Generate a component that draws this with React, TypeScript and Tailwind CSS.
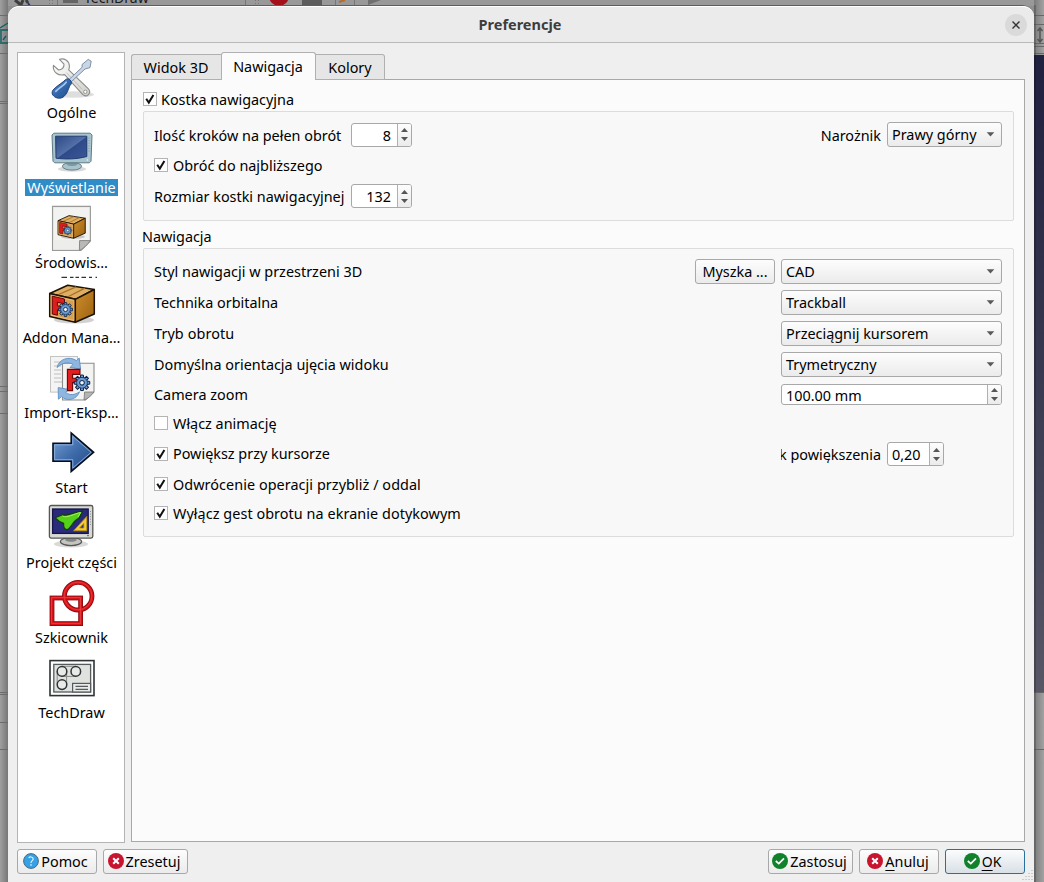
import React from "react";

const F = "font-['Noto_Sans',sans-serif]";

function Gear({ x, y, r }: { x: number; y: number; r: number }) {
  const teeth = [0, 45, 90, 135, 180, 225, 270, 315];
  return (
    <g transform={`translate(${x} ${y}) scale(${r / 8})`}>
      {teeth.map((a) => (
        <path key={a} d="M-1.9 -5 L-1.5 -8.6 H1.5 L1.9 -5 Z" transform={`rotate(${a})`} fill="#729fcf" stroke="#0b1f42" strokeWidth="1.1" />
      ))}
      <circle r="6" fill="#5b8bc4" stroke="#17335f" strokeWidth="0.9" />
      <circle r="5.2" fill="#6d9dd3" />
      <circle r="2.6" fill="#f2f2ee" stroke="#17335f" strokeWidth="1.2" />
    </g>
  );
}

function Crate() {
  return (
    <g strokeLinejoin="round">
      <ellipse cx="26" cy="41" rx="20" ry="3.5" fill="#000" opacity="0.18" />
      <path d="M1.7 14.5 L19.7 6.3 L46.3 10.5 L27.3 20.3 Z" fill="#e0ae62" stroke="#1d1204" strokeWidth="1.5" />
      <path d="M9.5 16 L28 7.8 M19.5 18 L37 9.2" stroke="#a3702a" strokeWidth="1.3" />
      <path d="M1.7 14.5 L27.3 20.3 V43.3 L1.7 37.5 Z" fill="#d9a050" stroke="#1d1204" strokeWidth="1.5" />
      <path d="M27.3 20.3 L46.3 10.5 V35 L27.3 43.3 Z" fill="url(#side)" stroke="#1d1204" strokeWidth="1.5" />
      <path d="M3.2 16.4 L25.9 21.5 V41.5 L3.2 36.2 Z" fill="none" stroke="#efc98a" strokeWidth="0.7" />
      <path d="M4.3 17.2 L16.5 20 V24.8 L9.4 23.2 V26.8 L14.5 28 V32 L9.4 30.8 V36.2 L4.3 35 Z" fill="#dd1d1d" stroke="#6a0606" strokeWidth="1" />
      <Gear x={17.5} y={30.5} r={6.4} />
    </g>
  );
}

function Defs() {
  return (
    <svg width="0" height="0" className="absolute">
      <defs>
        <linearGradient id="side" x1="0" y1="0" x2="1" y2="1">
          <stop offset="0" stopColor="#d08f2e" />
          <stop offset="1" stopColor="#9a610f" />
        </linearGradient>
        <linearGradient id="screen" x1="0" y1="0" x2="1" y2="1">
          <stop offset="0" stopColor="#2b4a86" />
          <stop offset="0.5" stopColor="#5570a8" />
          <stop offset="0.52" stopColor="#2e4a88" />
          <stop offset="1" stopColor="#3c589a" />
        </linearGradient>
        <linearGradient id="arrow" x1="0" y1="0" x2="1" y2="1">
          <stop offset="0" stopColor="#7ba3d4" />
          <stop offset="0.5" stopColor="#3f6cab" />
          <stop offset="1" stopColor="#23457f" />
        </linearGradient>
        <linearGradient id="metal" x1="0" y1="0" x2="1" y2="1">
          <stop offset="0" stopColor="#ffffff" />
          <stop offset="1" stopColor="#cfcfcb" />
        </linearGradient>
        <linearGradient id="grip" x1="0" y1="0" x2="1" y2="1">
          <stop offset="0" stopColor="#6c9ddb" />
          <stop offset="0.5" stopColor="#3468ae" />
          <stop offset="1" stopColor="#1f4887" />
        </linearGradient>
      </defs>
    </svg>
  );
}

const icons: Record<string, React.ReactNode> = {
  tools: (
    <>
      <ellipse cx="25" cy="40.5" rx="21" ry="3.2" fill="#000" opacity="0.13" />
      <path
        d="M11.5 5.3 C16 3.8 21.2 6.5 21.4 12 C21.5 13.4 21.2 14.6 20.7 15.8 L40.2 34.6 C44.2 38.8 38.8 44.4 34.6 40.4 L16.6 20.6 C10.5 22.4 4.6 18.2 5.4 11.4 L10.6 16 C13.8 16 16.2 13.8 16 10.2 Z"
        fill="url(#metal)" stroke="#8b8d88" strokeWidth="1.1" strokeLinejoin="round"
      />
      <circle cx="37.3" cy="37.8" r="1.7" fill="#fff" stroke="#8b8d88" strokeWidth="0.9" />
      <path d="M18.5 18.7 L34 35.2" stroke="#b9bbb6" strokeWidth="0.9" />
      <path d="M20.5 26 L34.2 13.2 L34 10.6 L40.2 5.4 L43.2 7.2 L42 13.6 L37 15 L22.6 28.4 Z" fill="#c9d6e6" stroke="#7e90a8" strokeWidth="1" strokeLinejoin="round" />
      <path d="M17.6 25.6 C19 24.4 21 24.8 22.2 26 C23.6 27.4 24 29.6 22.6 30.8 C20.6 32.4 20.6 38.2 16 42.4 C13.6 44.6 9.6 44.9 6.6 42.8 C3.4 40.4 3.4 37.4 6 35 C9.6 31.4 14.8 28.6 17.6 25.6 Z" fill="url(#grip)" stroke="#1e437e" strokeWidth="1" />
      <path d="M18.2 28.2 C15.8 31.8 10.6 34.2 7.8 37.4" fill="none" stroke="#a9c8ee" strokeWidth="1.6" strokeLinecap="round" />
    </>
  ),
  display: (
    <>
      <ellipse cx="24" cy="40" rx="14" ry="2.8" fill="#000" opacity="0.15" />
      <path d="M19 33 h10 l1 5 h-12 z" fill="#8fabb5" />
      <ellipse cx="24" cy="37.3" rx="9.6" ry="3.8" fill="#a9c2cb" stroke="#5a7680" strokeWidth="0.9" />
      <path d="M18.6 33.4 h10.8 v2.2 c-3 2 -7.8 2 -10.8 0 z" fill="#7b98a2" />
      <path d="M5.8 4.2 H42.2 L44 6 L43 32.2 L41.4 33.8 H6.6 L5 32.2 L4 6 Z" fill="#a8c4cf" stroke="#5c7984" strokeWidth="1" />
      <path d="M7.6 7.2 H38.8 V27.5 C28 30.4 18 30.4 8 29.2 Z" fill="url(#screen)" stroke="#1c3468" strokeWidth="0.9" />
      <path d="M41 8.5 v14" stroke="#6e8d98" strokeWidth="0.9" strokeDasharray="1 1.6" />
      <circle cx="39.4" cy="31" r="0.8" fill="#e8f4f8" />
    </>
  ),
  workbench: (
    <>
      <path d="M4.5 2.4 H42.4 V37 L33 46.4 H4.5 Z" fill="#ebebea" stroke="#9a9b98" strokeWidth="1.1" />
      <path d="M6 4 H41 V36.6 H6 Z" fill="#f2f2f1" />
      <path d="M5.5 36 H34 V45.6 H5.5Z" fill="#ededec" />
      <path d="M31.4 46.4 L31.6 36.6 H42.4 C39 41 36 44.5 31.4 46.4 Z" fill="#b9bab7" stroke="#7f807d" strokeWidth="0.9" />
      <g transform="translate(9 7.8) scale(0.61)">
        <Crate />
      </g>
    </>
  ),
  crate: <Crate />,
  io: (
    <>
      <rect x="2.5" y="2.5" width="27" height="35.6" fill="#f4f4f4" stroke="#c3c4c2" />
      <path d="M6 8h9M6 12h7M6 16h7M6 20h7M6 24h7M6 28h8" stroke="#d0d0d0" strokeWidth="1.3" />
      <path d="M14.5 9.3 H46 V37.8 L37.5 46 H14.5 Z" fill="#f3f3f2" stroke="#8c8d8a" strokeWidth="1.1" />
      <path d="M36 46 L36.6 38 H46 C43.4 41.4 40 44.8 36 46 Z" fill="#b4b5b2" stroke="#777875" strokeWidth="0.8" />
      <path d="M9 13.5 C11 5.2 21 1.6 28.4 6.6 L31.2 4 L32.6 15 L22 13.4 L25 10.4 C20 7.2 14.2 9 9 13.5 Z" fill="#8fb6df" stroke="#5f8fc5" strokeWidth="0.9" />
      <path d="M31.5 37.8 C28.5 46.4 18.4 47.4 13.6 42.6 L10.4 45.2 L10.2 33.6 L20.8 35.4 L17.6 38.4 C22 41.8 27 41 31.5 37.8 Z" fill="#8fb6df" stroke="#5f8fc5" strokeWidth="0.9" />
      <path d="M19.4 15.4 H32 V20.4 H24.6 V24.2 H29.6 V28.6 H24.6 V36.6 H19.4 Z" fill="#e02020" stroke="#6a0606" strokeWidth="1.1" />
      <Gear x={34} y={28.8} r={7.2} />
    </>
  ),
  start: (
    <>
      <path d="M5 14.3 H23.2 V4 L45.6 23.3 L23.2 42.6 V32.3 H5 Z" fill="url(#arrow)" stroke="#060d1b" strokeWidth="1.6" strokeLinejoin="miter" />
      <path d="M6.6 15.9 H24.8 V7.5 L43.2 23.3 L24.8 39.1 V30.7 H6.6 Z" fill="none" stroke="#8cb1df" strokeWidth="0.9" />
    </>
  ),
  part: (
    <>
      <ellipse cx="23" cy="40" rx="17" ry="3.6" fill="#000" opacity="0.15" />
      <path d="M17 33 h12 l1 5 h-14 z" fill="#a9a9a6" />
      <ellipse cx="23" cy="37.6" rx="10.6" ry="4" fill="#c4c5c1" stroke="#555753" strokeWidth="1.2" />
      <path d="M17.4 34 h11.2 v2.4 c-3 1.8 -8 1.8 -11.2 0 z" fill="#858682" />
      <rect x="1.4" y="1.5" width="43.4" height="32.6" rx="1.8" fill="#d9dad6" stroke="#555753" strokeWidth="1.3" />
      <rect x="4.6" y="5" width="35.6" height="24.4" fill="#2a2a7c" stroke="#15154a" strokeWidth="1.3" />
      <path d="M7.2 13.8 L14.5 10.6 C19 13 25 8 34.6 7.2 L30.8 14.4 C26 15.5 23.4 23.4 19.6 25.4 C16.4 26 15.4 23.4 15.6 19.4 C13 18.6 10 16.6 7.2 13.8 Z" fill="#55cf18" stroke="#103d05" strokeWidth="1.2" />
      <path d="M14.5 12 C19 14.6 26 9.6 32.6 8.6 L30 13" fill="none" stroke="#a5ee6a" strokeWidth="1" />
      <path d="M38.8 12.4 V26.8 H25.6 Z M35.8 19.5 L31.6 24 H35.8 Z" fill="#f2cc38" stroke="#b78c0a" strokeWidth="0.8" fillRule="evenodd" />
      <path d="M42.5 7 v14" stroke="#8b8c88" strokeWidth="0.9" strokeDasharray="1 1.6" />
      <circle cx="40" cy="31.6" r="0.8" fill="#555753" />
    </>
  ),
  sketch: (
    <g fill="none">
      <rect x="4" y="19" width="28.6" height="25.6" stroke="#8e0b10" strokeWidth="4.8" />
      <circle cx="30.2" cy="17.2" r="13.8" stroke="#8e0b10" strokeWidth="4.8" />
      <rect x="4" y="19" width="28.6" height="25.6" stroke="#d8141b" strokeWidth="3" />
      <circle cx="30.2" cy="17.2" r="13.8" stroke="#d8141b" strokeWidth="3" />
      <rect x="3.6" y="18.6" width="28.8" height="25.8" stroke="#ef3a3a" strokeWidth="0.9" />
      <circle cx="30" cy="17" r="13.9" stroke="#ef3a3a" strokeWidth="0.9" />
    </g>
  ),
  techdraw: (
    <g fill="none">
      <rect x="2" y="6.6" width="44" height="35" fill="#fff" stroke="#2e3436" strokeWidth="1.6" />
      <rect x="5.8" y="10.4" width="36.8" height="27.6" fill="#dfe2de" stroke="#555a5c" strokeWidth="1.3" />
      <path d="M14 12.3 H28 M14 22.4 H28 M9.2 17 V30 M18.6 17 V30" stroke="#888a85" strokeWidth="1" />
      <circle cx="14" cy="17.4" r="4.8" fill="#e8eae7" stroke="#2e3436" strokeWidth="1.5" />
      <circle cx="27.8" cy="17.4" r="4.8" fill="#e8eae7" stroke="#2e3436" strokeWidth="1.5" />
      <circle cx="14" cy="30.6" r="4.8" fill="#e8eae7" stroke="#2e3436" strokeWidth="1.5" />
      <rect x="24.6" y="29.4" width="18" height="8.6" fill="#e8eae7" stroke="#555a5c" strokeWidth="1.2" />
      <path d="M27.5 32.3 H40 M27.5 35.4 H40" stroke="#555a5c" strokeWidth="1.2" />
    </g>
  ),
};

type Item = { icon: string; label: string; selected?: boolean };
const items: Item[] = [
  { icon: "tools", label: "Ogólne" },
  { icon: "display", label: "Wyświetlanie", selected: true },
  { icon: "workbench", label: "Środowis…" },
  { icon: "crate", label: "Addon Mana…" },
  { icon: "io", label: "Import-Eksp…" },
  { icon: "start", label: "Start" },
  { icon: "part", label: "Projekt części" },
  { icon: "sketch", label: "Szkicownik" },
  { icon: "techdraw", label: "TechDraw" },
];

function Check({ on, children, className = "" }: { on?: boolean; children: React.ReactNode; className?: string }) {
  return (
    <label className={`flex items-center ${className}`}>
      <span className="flex size-[14px] items-center justify-center border border-[#b4b4b4] bg-white">
        {on && (
          <svg width="12" height="12" viewBox="0 0 12 12">
            <path d="M2.2 5.8 L4.8 9.6 L9.4 2" fill="none" stroke="#111" strokeWidth="2" />
          </svg>
        )}
      </span>
      {children}
    </label>
  );
}

function Combo({ text, className }: { text: string; className: string }) {
  return (
    <div className={`flex h-[25px] items-center justify-between rounded-[3px] border border-[#a8a8a8] bg-linear-to-b from-[#fdfdfd] to-[#ebebeb] pl-1 pr-[6px] ${className}`}>
      <span>{text}</span>
      <svg width="9" height="5" viewBox="0 0 9 5">
        <path d="M0.7 0.3 H8.3 L4.5 4.4 Z" fill="#5a5a5a" />
      </svg>
    </div>
  );
}

function Spin({ text, className, right }: { text: string; className: string; right?: boolean }) {
  return (
    <div className={`flex overflow-hidden rounded-[3px] border border-[#a8a8a8] bg-white ${className}`}>
      <span className={`flex flex-1 items-center pt-px ${right ? "justify-end pr-[6px]" : "pl-1"}`}>{text}</span>
      <span className="flex w-[14px] flex-col items-center justify-center gap-[5px] border-l border-[#b0b0b0] bg-linear-to-b from-[#fdfdfd] to-[#ebebeb] pr-px">
        <svg width="7" height="4" viewBox="0 0 7 4"><path d="M0 4 L3.5 0 L7 4 Z" fill="#555" /></svg>
        <svg width="7" height="4" viewBox="0 0 7 4"><path d="M0 0 H7 L3.5 4 Z" fill="#555" /></svg>
      </span>
    </div>
  );
}

function Badge({ kind }: { kind: "help" | "cancel" | "ok" }) {
  return (
    <svg width="16" height="16" viewBox="0 0 16 16" className="mb-[2px] shrink-0">
      <circle cx="8" cy="8" r={kind === "help" ? 7.4 : 8} fill={kind === "help" ? "#36a1e3" : kind === "ok" ? "#12812b" : "#c8142f"} stroke={kind === "help" ? "#4c6b82" : "none"} strokeWidth="1" />
      {kind === "ok" && <path d="M3.8 8 L6.8 10.6 L12 5.4" fill="none" stroke="#fff" strokeWidth="1.7" />}
      {kind === "cancel" && <path d="M5.2 5.2 L10.8 10.8 M10.8 5.2 L5.2 10.8" stroke="#fff" strokeWidth="2" />}
      {kind === "help" && (
        <>
          <path d="M5.8 5 C6.4 3.6 10.2 3.4 10.2 6 C10.2 7.6 8 7.8 8 10" fill="none" stroke="#d8f0ff" strokeWidth="1.2" />
          <rect x="7.3" y="11.2" width="1.4" height="1.5" fill="#d8f0ff" />
        </>
      )}
    </svg>
  );
}

const btn = "flex h-[25px] items-center justify-center rounded-[3px] border border-[#a8a8a8] bg-linear-to-b from-[#fdfdfd] to-[#ebebeb]";

function Backdrop() {
  return (
    <div className="absolute inset-0 flex flex-col overflow-hidden bg-[#8f8f8f]">
      <svg width="1044" height="882" viewBox="0 0 1044 882">
        <defs>
          <linearGradient id="lft" x1="0" x2="1"><stop offset="0" stopColor="#a0a0a0" /><stop offset="1" stopColor="#777" /></linearGradient>
          <linearGradient id="rgt" x1="0" x2="1"><stop offset="0" stopColor="#7b7b7b" /><stop offset="1" stopColor="#a2a2a2" /></linearGradient>
          <linearGradient id="view" x1="0" y1="0" x2="0" y2="1"><stop offset="0" stopColor="#20203f" /><stop offset="0.55" stopColor="#3b3b52" /><stop offset="1" stopColor="#575766" /></linearGradient>
        </defs>
        <rect width="1044" height="6" fill="#999" />
        <rect y="0" width="8" height="882" fill="url(#lft)" />
        <rect x="1034" width="10" height="882" fill="url(#rgt)" />
        <path d="M0 15.5H12M0 53.5H8M0 101.5H8M0 103.5H8M0 386.5H8M0 391.5H8M0 413.5H8M0 692.5H8M0 694.5H8M0 722.5H8M0 749.5H8" stroke="#6c6c6c" />
        <path d="M0 28 L8 23 M0 30 H8 M1 31 V42 M0 43 H8 M3 40 L6 36" stroke="#0c5f5f" strokeWidth="1.4" fill="none" />
        <path d="M15 0 L21 5 M21 5 L23 0 M26 0 L28 3" stroke="#3f3f3f" strokeWidth="3" fill="none" />
        <path d="M28 3 L30 6" stroke="#26397a" strokeWidth="2" />
        <path d="M57.5 0V5M245.5 0V5" stroke="#777" />
        <rect x="63" width="15" height="3" fill="#666" />
        <text x="84" y="2.5" fontSize="14" fontFamily="Noto Sans" fill="#1a1a1a">TechDraw</text>
        <path d="M49.5 0V6M52.5 0V6M255.5 0V6M258.5 0V6" stroke="#777" strokeDasharray="1 2" />
        <circle cx="279" cy="-4" r="10" fill="#a3101c" />
        <rect x="302" width="20" height="5" fill="#5d5d5d" />
        <path d="M335.5 0V5M354.5 0V5" stroke="#777" />
        <path d="M339 2 L345 0" stroke="#b86a2a" strokeWidth="2" />
        <path d="M368 0 H381 L368 5 Z" fill="#6f6f6f" />
        <path d="M1034 15.5H1044M1034 24.5H1044M1034 43.5H1044M1034 46.5H1044M1034 53.5H1044" stroke="#666" />
        <path d="M1040 29 V41 M1037.5 31 L1040 28 L1042.5 31 M1037.5 39 L1040 42 L1042.5 39" stroke="#555" strokeWidth="1.5" fill="none" />
        <rect x="1034" y="55" width="10" height="637" fill="url(#view)" />
        <path d="M1034 692.5H1044M1034 749.5H1044" stroke="#666" />
        <rect x="1034" y="5" width="2" height="877" fill="#000" opacity="0.18" />
      </svg>
    </div>
  );
}

export default function App() {
  return (
    <div className={`relative h-[882px] w-[1044px] overflow-hidden pl-2 pt-[5px] text-[14.4px] leading-[17px] whitespace-nowrap text-black ${F}`}>
      <Backdrop />
      <Defs />
      <div className="relative flex h-[877px] w-[1026px] flex-col rounded-t-[12px] border-t border-[#5e5e5e] bg-[#efefef]">
        <header className="flex h-[37px] items-center rounded-t-[11px] border-t border-b border-t-white border-b-[#b9b9b9] bg-[#ebebeb]">
          <h1 className="flex-1 pl-[27px] text-center text-[14.5px] font-bold text-[#3d3d3d]">Preferencje</h1>
          <button className="mr-[7px] flex size-[22px] items-center justify-center rounded-full bg-[#dadada]">
            <svg width="8" height="8" viewBox="0 0 8 8"><path d="M0.5 0.5 L7.5 7.5 M7.5 0.5 L0.5 7.5" stroke="#333" strokeWidth="1.4" /></svg>
          </button>
        </header>

        <div className="flex gap-[6px] pl-[9px] pt-[9px]">
          <nav className="flex h-[791px] w-[108px] flex-col border border-[#b4b4b4] bg-white pt-px pl-px">
            {items.map((it) => (
              <div key={it.label} className="flex h-[75px] flex-col items-center">
                <svg width="48" height="48" viewBox="0 0 48 48" className="shrink-0">{icons[it.icon]}</svg>
                <span className={`mt-[2px] h-[17px] px-[2px] ${it.selected ? "bg-[#308cc6] text-white" : ""}`}>{it.label}</span>
                {it.icon === "workbench" && (
                  <svg width="38" height="2" viewBox="0 0 38 2" className="mt-[5px] ml-4">
                    <path d="M0.5 1.3 H6 M9 1.3 H12.5 M14.5 1.3 H18 M20.5 1.3 H25 M28 1.3 H31 M34.5 1.3 H36" stroke="#333" strokeWidth="1.2" />
                  </svg>
                )}
              </div>
            ))}
          </nav>

          <main className="flex h-[790px] w-[894px] flex-col">
            <div className="relative z-10 flex h-[28px] items-end">
              <div className="flex h-[26px] w-[90px] items-center justify-center rounded-tl-[3px] border border-r-0 border-[#b0b0b0] bg-[#e6e6e6] pr-px">Widok 3D</div>
              <div className="flex h-[28px] w-[95px] items-center justify-center rounded-t-[3px] border border-b-0 border-[#b0b0b0] bg-[#fbfbfb] pr-px">Nawigacja</div>
              <div className="flex h-[26px] w-[69px] items-center justify-center rounded-tr-[3px] border border-l-0 border-[#b0b0b0] bg-[#e6e6e6]">Kolory</div>
            </div>
            <div className="-mt-px flex flex-1 flex-col border border-[#a8a8a8] bg-[#fbfbfb] pl-[11px] pr-[10px] pt-[12px]">
              <Check on className="h-[14px] gap-1">Kostka nawigacyjna</Check>
              <section className="mt-[5px] flex h-[110px] w-[871px] flex-col rounded-[2px] border border-[#dcdcdc] bg-[#f8f8f8] pl-[10px] pr-[11px] pt-[10px]">
                <div className="flex h-[25px] items-center">
                  <span className="w-[197px] pt-px">Ilość kroków na pełen obrót</span>
                  <Spin right text="8" className="h-[24px] w-[61px]" />
                  <span className="ml-auto mr-[6px] pt-px">Narożnik</span>
                  <Combo text="Prawy górny" className="w-[115px]" />
                </div>
                <Check on className="mt-[11px] h-[14px] gap-[5px]">Obróć do najbliższego</Check>
                <div className="mt-[12px] flex h-[24px] items-center">
                  <span className="w-[197px]">Rozmiar kostki nawigacyjnej</span>
                  <Spin right text="132" className="h-[24px] w-[61px]" />
                </div>
              </section>
              <h2 className="-ml-px mt-[7px] h-[17px]">Nawigacja</h2>
              <section className="mt-[3px] flex h-[289px] w-[871px] flex-col rounded-[2px] border border-[#dcdcdc] bg-[#f8f8f8] pl-[10px] pr-[11px] pt-[10px]">
                <div className="flex h-[25px] items-center">
                  <span className="flex-1 tracking-[0.02px]">Styl nawigacji w przestrzeni 3D</span>
                  <button className={`${btn} mr-[6px] w-[80px]`}>Myszka ...</button>
                  <Combo text="CAD" className="w-[221px]" />
                </div>
                <div className="mt-[6px] flex h-[25px] items-center justify-between">
                  <span>Technika orbitalna</span>
                  <Combo text="Trackball" className="w-[221px]" />
                </div>
                <div className="mt-[6px] flex h-[25px] items-center justify-between">
                  <span className="tracking-[0.1px]">Tryb obrotu</span>
                  <Combo text="Przeciągnij kursorem" className="w-[221px]" />
                </div>
                <div className="mt-[6px] flex h-[25px] items-center justify-between">
                  <span>Domyślna orientacja ujęcia widoku</span>
                  <Combo text="Trymetryczny" className="w-[221px]" />
                </div>
                <div className="mt-[7px] flex h-[21px] items-center justify-between">
                  <span>Camera zoom</span>
                  <Spin text="100.00 mm" className="h-[21px] w-[221px]" />
                </div>
                <Check className="mt-[11px] h-[14px] gap-[5px]">Włącz animację</Check>
                <div className="mt-[12px] flex h-[24px] items-center">
                  <Check on className="mb-px h-[14px] gap-[5px]">Powiększ przy kursorze</Check>
                  <span className="ml-auto mr-[6px] flex w-[100px] justify-end overflow-hidden">Krok powiększenia</span>
                  <Spin text="0,20" className="mr-[58px] h-[24px] w-[57px]" />
                </div>
                <Check on className="mt-[11px] h-[14px] gap-[5px] tracking-[0.06px]">Odwrócenie operacji przybliż / oddal</Check>
                <Check on className="mt-[15px] h-[14px] gap-[5px] tracking-[0.06px]">Wyłącz gest obrotu na ekranie dotykowym</Check>
              </section>
            </div>
          </main>
        </div>

        <footer className="mt-[6px] flex h-[25px] gap-[6px] pl-[9px] pr-[9px]">
          <button className={`${btn} w-[80px] gap-[2px] pr-[3px]`}><Badge kind="help" />Pomoc</button>
          <button className={`${btn} w-[85px] gap-[2px] pr-[3px]`}><Badge kind="cancel" />Zresetuj</button>
          <button className={`${btn} ml-auto w-[85px] gap-[2px] pr-[2px]`}><Badge kind="ok" />Zastosuj</button>
          <button className={`${btn} w-[80px] gap-[2px] pr-[2px]`}><Badge kind="cancel" /><span><u className="underline-offset-3">A</u>nuluj</span></button>
          <button className="flex h-[25px] w-[80px] items-center justify-center gap-[2px] rounded-[3px] border border-[#2a6f9e] bg-linear-to-b from-[#fbfcfd] to-[#d9e0e6] pr-[5px]"><Badge kind="ok" /><span className="text-[14px]"><u className="underline-offset-3">O</u>K</span></button>
        </footer>
        <svg width="12" height="12" viewBox="0 0 12 12" className="absolute bottom-0 right-px">
          <path d="M10.5 0.5h1M7.5 3.5h1M10.5 3.5h1M4.5 6.5h1M7.5 6.5h1M10.5 6.5h1M1.5 9.5h1M4.5 9.5h1M7.5 9.5h1M10.5 9.5h1" stroke="#aaa" />
        </svg>
      </div>
    </div>
  );
}
